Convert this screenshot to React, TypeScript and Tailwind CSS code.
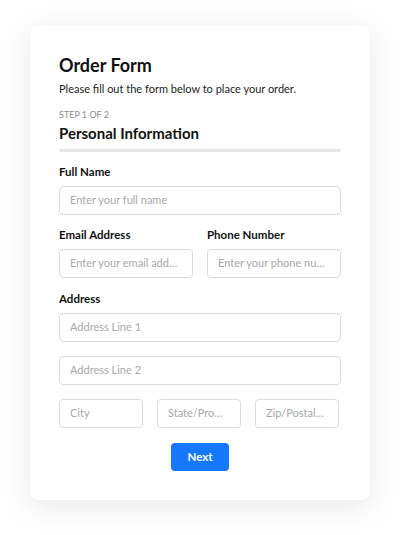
import React from "react";

function Field({ placeholder, className = "" }: { placeholder: string; className?: string }) {
  return (
    <div
      className={`h-[29px] rounded-[4px] border border-[#dcdcdc] bg-white flex items-center pl-[10px] pr-[13px] overflow-hidden ${className}`}
    >
      <span className="text-[11px] text-[#a8a8a8] whitespace-nowrap overflow-hidden text-ellipsis">
        {placeholder}
      </span>
    </div>
  );
}

export default function App() {
  return (
    <div
      className="min-h-[535px] w-full bg-white flex justify-center pt-[26px]"
      style={{ fontFamily: 'Lato, "Noto Sans", sans-serif' }}
    >
      <div className="w-[340px] h-[474px] rounded-[8px] bg-white shadow-[0_6px_30px_rgba(0,0,0,0.1)] px-[29px] pt-[27px] flex flex-col">
        <h1 className="text-[18px] leading-[24px] font-bold text-[#111]">Order Form</h1>
        <p className="mt-[3px] text-[11px] leading-[18px] text-[#222]">
          Please fill out the form below to place your order.
        </p>
        <div className="mt-[10px] text-[9px] leading-[14px] text-[#8c8c8c]">STEP 1 OF 2</div>
        <h2 className="mt-[1px] text-[15px] leading-[20px] font-bold text-[#111]">Personal Information</h2>
        <div className="mt-[6px] h-[3px] bg-[#e6e6e6] rounded-full" />

        <label className="mt-[12px] text-[11.5px] leading-[16px] font-bold text-[#111]">Full Name</label>
        <Field placeholder="Enter your full name" className="mt-[6px]" />

        <div className="mt-[12px] flex gap-[14px]">
          <div className="flex-1 flex flex-col min-w-0">
            <label className="text-[11.5px] leading-[16px] font-bold text-[#111]">Email Address</label>
            <Field placeholder="Enter your email address" className="mt-[6px]" />
          </div>
          <div className="flex-1 flex flex-col min-w-0">
            <label className="text-[11.5px] leading-[16px] font-bold text-[#111]">Phone Number</label>
            <Field placeholder="Enter your phone number" className="mt-[6px]" />
          </div>
        </div>

        <label className="mt-[13px] text-[11.5px] leading-[16px] font-bold text-[#111]">Address</label>
        <Field placeholder="Address Line 1" className="mt-[6px]" />
        <Field placeholder="Address Line 2" className="mt-[14px]" />
        <div className="mt-[14px] flex gap-[14px] pr-[2px]">
          <Field placeholder="City" className="flex-1 min-w-0" />
          <Field placeholder="State/Province" className="flex-1 min-w-0" />
          <Field placeholder="Zip/Postal Code" className="flex-1 min-w-0" />
        </div>

        <div className="mt-[15px] flex justify-center">
          <button className="w-[58px] h-[28px] rounded-[4px] bg-[#1677ff] text-white text-[11.5px] font-bold">
            Next
          </button>
        </div>
      </div>
    </div>
  );
}
